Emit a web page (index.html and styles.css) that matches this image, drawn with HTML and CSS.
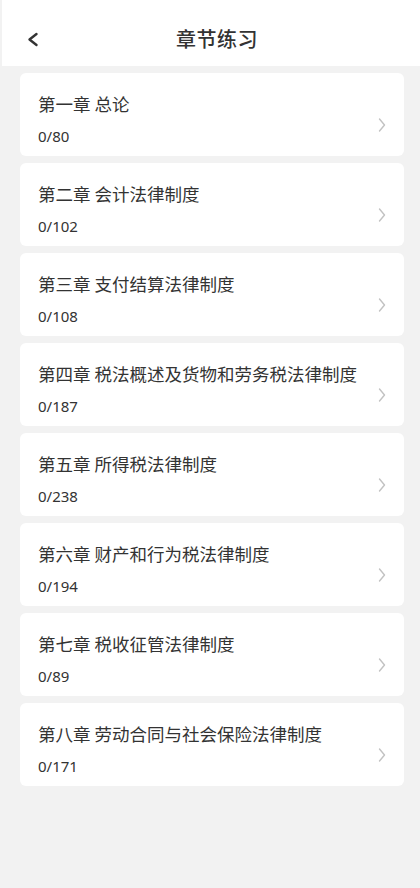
FILE: index.html
```html
<!DOCTYPE html>
<html lang="zh">
<head>
<meta charset="utf-8">
<link rel="stylesheet" href="styles.css">
</head>
<body>
<div class="page">
  <header class="header">
    <svg class="back" viewBox="0 0 14 18" width="14" height="18"><path d="M10.5 3 L3.5 8.5 L10.5 14" fill="none" stroke="#333" stroke-width="2.4" stroke-linecap="round" stroke-linejoin="round"/></svg>
    <h1 class="title">章节练习</h1>
  </header>
  <main class="list">
    <div class="card"><div class="info"><div class="name">第一章 总论</div><div class="count">0/80</div></div><svg class="chev" viewBox="0 0 8 16" width="8" height="16"><path d="M1.5 2 L6.5 8 L1.5 14" fill="none" stroke="#c2c2c2" stroke-width="1.4" stroke-linecap="round" stroke-linejoin="round"/></svg></div>
    <div class="card"><div class="info"><div class="name">第二章 会计法律制度</div><div class="count">0/102</div></div><svg class="chev" viewBox="0 0 8 16" width="8" height="16"><path d="M1.5 2 L6.5 8 L1.5 14" fill="none" stroke="#c2c2c2" stroke-width="1.4" stroke-linecap="round" stroke-linejoin="round"/></svg></div>
    <div class="card"><div class="info"><div class="name">第三章 支付结算法律制度</div><div class="count">0/108</div></div><svg class="chev" viewBox="0 0 8 16" width="8" height="16"><path d="M1.5 2 L6.5 8 L1.5 14" fill="none" stroke="#c2c2c2" stroke-width="1.4" stroke-linecap="round" stroke-linejoin="round"/></svg></div>
    <div class="card"><div class="info"><div class="name">第四章 税法概述及货物和劳务税法律制度</div><div class="count">0/187</div></div><svg class="chev" viewBox="0 0 8 16" width="8" height="16"><path d="M1.5 2 L6.5 8 L1.5 14" fill="none" stroke="#c2c2c2" stroke-width="1.4" stroke-linecap="round" stroke-linejoin="round"/></svg></div>
    <div class="card"><div class="info"><div class="name">第五章 所得税法律制度</div><div class="count">0/238</div></div><svg class="chev" viewBox="0 0 8 16" width="8" height="16"><path d="M1.5 2 L6.5 8 L1.5 14" fill="none" stroke="#c2c2c2" stroke-width="1.4" stroke-linecap="round" stroke-linejoin="round"/></svg></div>
    <div class="card"><div class="info"><div class="name">第六章 财产和行为税法律制度</div><div class="count">0/194</div></div><svg class="chev" viewBox="0 0 8 16" width="8" height="16"><path d="M1.5 2 L6.5 8 L1.5 14" fill="none" stroke="#c2c2c2" stroke-width="1.4" stroke-linecap="round" stroke-linejoin="round"/></svg></div>
    <div class="card"><div class="info"><div class="name">第七章 税收征管法律制度</div><div class="count">0/89</div></div><svg class="chev" viewBox="0 0 8 16" width="8" height="16"><path d="M1.5 2 L6.5 8 L1.5 14" fill="none" stroke="#c2c2c2" stroke-width="1.4" stroke-linecap="round" stroke-linejoin="round"/></svg></div>
    <div class="card"><div class="info"><div class="name">第八章 劳动合同与社会保险法律制度</div><div class="count">0/171</div></div><svg class="chev" viewBox="0 0 8 16" width="8" height="16"><path d="M1.5 2 L6.5 8 L1.5 14" fill="none" stroke="#c2c2c2" stroke-width="1.4" stroke-linecap="round" stroke-linejoin="round"/></svg></div>
  </main>
</div>
</body>
</html>
```
FILE: styles.css
```css
* { box-sizing: border-box; }
html, body { margin: 0; padding: 0; }
body {
  background: #f2f2f2;
  font-family: "Noto Sans CJK SC", "Noto Sans", sans-serif;
  color: #333;
  width: 420px;
  height: 888px;
  overflow: hidden;
}
.page { padding-left: 2px; }
.header {
  height: 66px;
  background: #fff;
  display: flex;
  align-items: center;
  justify-content: center;
  position: relative;
}
.back { position: absolute; left: 24px; top: 31px; }
.title {
  margin: 0;
  font-size: 20px;
  font-weight: 500;
  line-height: 26px;
  color: #333;
  margin-top: 12px;
  margin-left: 12px;
  letter-spacing: 0.5px;
}
.list {
  padding: 7px 16px 0 18px;
  display: flex;
  flex-direction: column;
  gap: 7px;
}
.card {
  background: #fff;
  border-radius: 6px;
  height: 83px;
  display: flex;
  align-items: flex-start;
  padding: 21px 18px 0 18px;
}
.info { flex: 1; }
.name {
  font-size: 17.5px;
  line-height: 20px;
  color: #333;
}
.count {
  font-size: 15px;
  line-height: 22px;
  color: #333;
  margin-top: 11px;
  font-family: "Noto Sans", "Noto Sans CJK SC", sans-serif;
}
.chev { flex: none; margin-top: 23px; }
```
